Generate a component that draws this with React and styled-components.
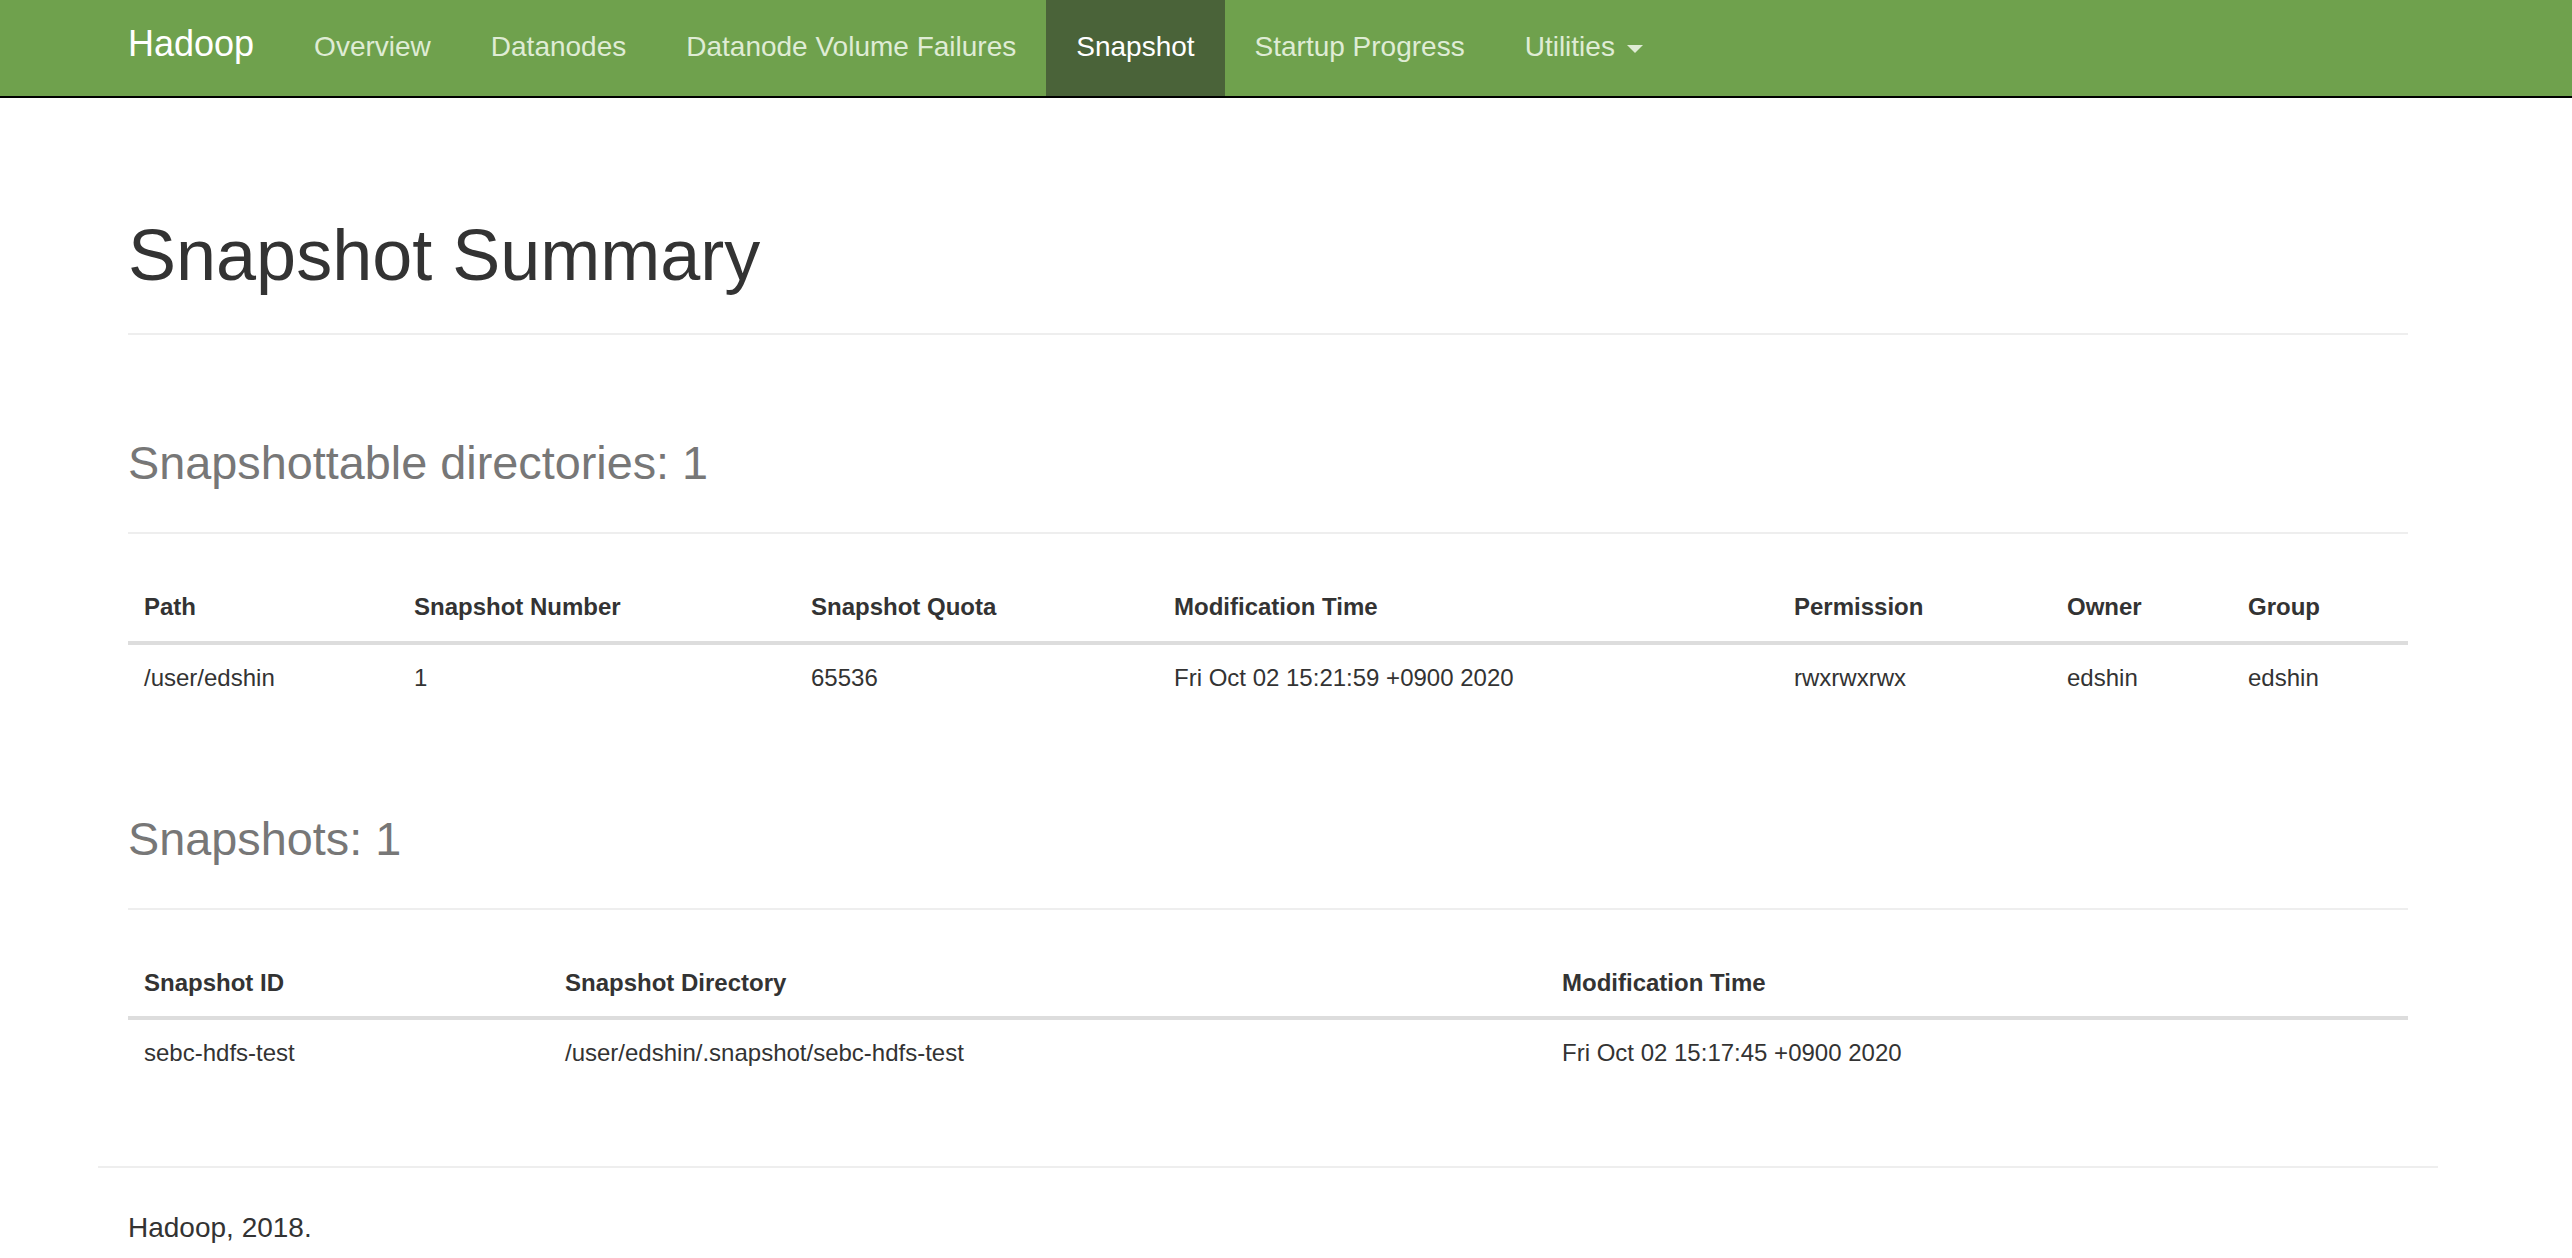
import React from 'react'
import styled, { createGlobalStyle } from 'styled-components'

const GlobalStyle = createGlobalStyle`
  html, body {
    margin: 0;
    padding: 0;
    background: #fff;
  }
  body {
    font-family: "Liberation Sans", Arial, Helvetica, sans-serif;
    font-size: 28px;
    line-height: 1.42857;
    color: #333;
  }
`

const Navbar = styled.nav`
  height: 96px;
  background-color: #6fa14d;
  border-bottom: 2px solid #000;
`

// page was captured with a scrollbar gutter, so the container sits left of centre
const Container = styled.div`
  box-sizing: border-box;
  width: 2340px;
  margin-left: calc((100% - 2376px) / 2);
  padding: 0 30px;
`

const NavInner = styled(Container)`
  display: flex;
  height: 100%;
`

const Brand = styled.a`
  box-sizing: border-box;
  margin-left: -30px;
  padding: 24px 30px 0;
  font-size: 36px;
  line-height: 40px;
  color: #fff;
  text-decoration: none;
`

const NavList = styled.ul`
  display: flex;
  margin: 0;
  padding: 0;
  list-style: none;
`

const NavLink = styled.a`
  display: block;
  box-sizing: border-box;
  height: 96px;
  padding: 27px 30px 0;
  font-size: 28px;
  line-height: 40px;
  text-decoration: none;
  color: ${props => (props.$active ? '#fff' : '#dfecd5')};
  background-color: ${props => (props.$active ? '#4a6339' : 'transparent')};
`

const Caret = styled.span`
  display: inline-block;
  width: 0;
  height: 0;
  margin-left: 12px;
  vertical-align: middle;
  border-top: 8px solid;
  border-left: 8px solid transparent;
  border-right: 8px solid transparent;
`

const PageHeader = styled.div`
  margin: ${props => (props.$first ? '118px' : '80px')} 0 40px;
  padding-bottom: 18px;
  border-bottom: 2px solid #eee;
`

const Title = styled.h1`
  margin: 0 0 20px;
  font-size: 72px;
  font-weight: 500;
  line-height: 1.1;
  color: #333;
`

const Small = styled.small`
  font-size: 65%;
  font-weight: normal;
  color: #777;
`

const Table = styled.table`
  width: 100%;
  table-layout: fixed;
  border-collapse: collapse;
  border-spacing: 0;
  font-size: 24px;
  line-height: 1.42857;
`

const Col = styled.col`
  width: ${props => props.$w}px;
`

const Th = styled.th`
  padding: 16px;
  text-align: left;
  font-weight: bold;
  vertical-align: bottom;
  border-bottom: 4px solid #ddd;
  white-space: nowrap;
`

const Td = styled.td`
  padding: 16px;
  vertical-align: top;
  white-space: nowrap;
`

const FooterRule = styled.hr`
  margin: 79px -30px 40px;
  border: 0;
  border-top: 2px solid #eee;
`

const FooterText = styled.p`
  margin: 0 0 20px;
`

const navItems = [
  'Overview',
  'Datanodes',
  'Datanode Volume Failures',
  'Snapshot',
  'Startup Progress'
]

const dirColumns = [
  { title: 'Path', w: 270 },
  { title: 'Snapshot Number', w: 397 },
  { title: 'Snapshot Quota', w: 363 },
  { title: 'Modification Time', w: 620 },
  { title: 'Permission', w: 273 },
  { title: 'Owner', w: 181 },
  { title: 'Group', w: 176 }
]

const dirRows = [
  ['/user/edshin', '1', '65536', 'Fri Oct 02 15:21:59 +0900 2020', 'rwxrwxrwx', 'edshin', 'edshin']
]

const snapColumns = [
  { title: 'Snapshot ID', w: 421 },
  { title: 'Snapshot Directory', w: 997 },
  { title: 'Modification Time', w: 862 }
]

const snapRows = [
  ['sebc-hdfs-test', '/user/edshin/.snapshot/sebc-hdfs-test', 'Fri Oct 02 15:17:45 +0900 2020']
]

const DataTable = ({ columns, rows }) => (
  <Table>
    <colgroup>
      {columns.map(col => <Col key={col.title} $w={col.w} />)}
    </colgroup>
    <thead>
      <tr>
        {columns.map(col => <Th key={col.title}>{col.title}</Th>)}
      </tr>
    </thead>
    <tbody>
      {rows.map((row, i) => (
        <tr key={i}>
          {row.map((cell, j) => <Td key={j}>{cell}</Td>)}
        </tr>
      ))}
    </tbody>
  </Table>
)

const App = () => (
  <>
    <GlobalStyle />
    <Navbar>
      <NavInner>
        <Brand href='#'>Hadoop</Brand>
        <NavList>
          {navItems.map(item => (
            <li key={item}>
              <NavLink href='#' $active={item === 'Snapshot'}>{item}</NavLink>
            </li>
          ))}
          <li>
            <NavLink href='#'>Utilities<Caret /></NavLink>
          </li>
        </NavList>
      </NavInner>
    </Navbar>

    <Container>
      <PageHeader $first>
        <Title>Snapshot Summary</Title>
      </PageHeader>

      <PageHeader>
        <Title><Small>Snapshottable directories: 1</Small></Title>
      </PageHeader>
      <DataTable columns={dirColumns} rows={dirRows} />

      <PageHeader>
        <Title><Small>Snapshots: 1</Small></Title>
      </PageHeader>
      <DataTable columns={snapColumns} rows={snapRows} />

      <FooterRule />
      <FooterText>Hadoop, 2018.</FooterText>
    </Container>
  </>
)

export default App
